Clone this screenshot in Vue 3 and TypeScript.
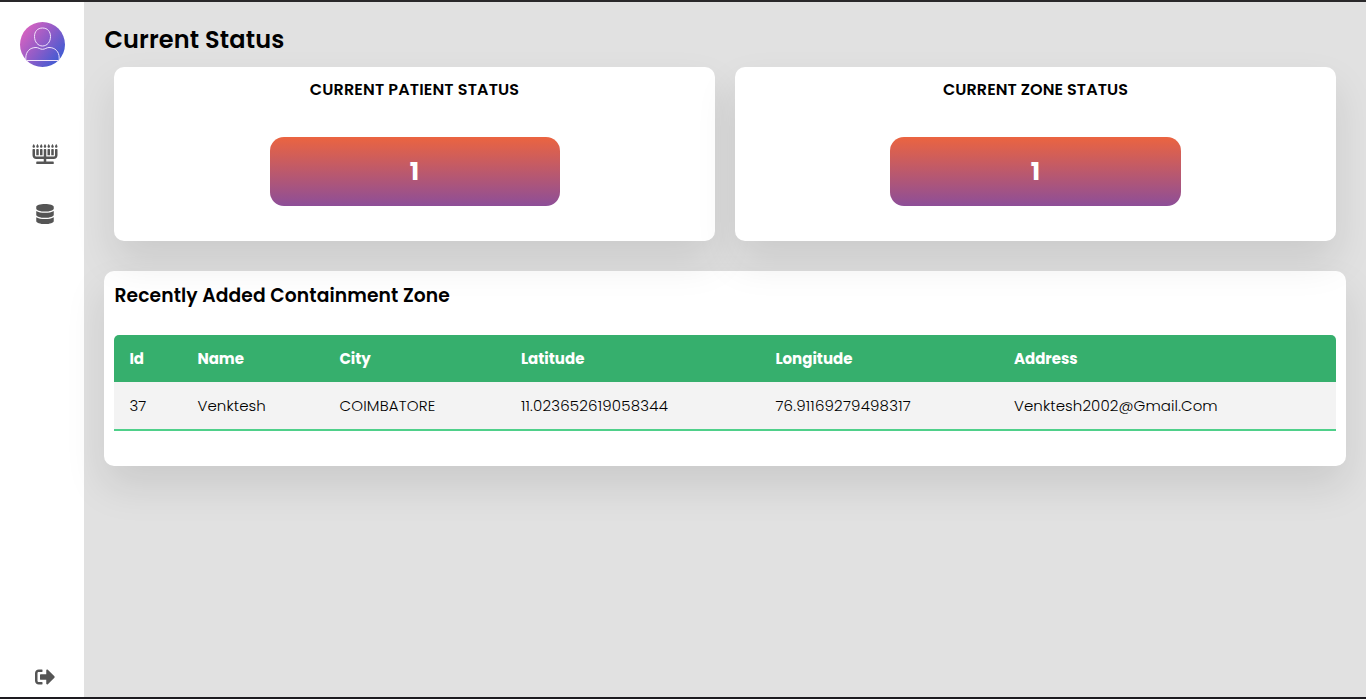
<script setup lang="ts">
interface StatusCard {
  title: string
  count: number
  kind: string
}

interface Zone {
  id: number
  name: string
  city: string
  latitude: string
  longitude: string
  address: string
}

const cards: StatusCard[] = [
  { title: 'CURRENT PATIENT STATUS', count: 1, kind: 'patient' },
  { title: 'CURRENT ZONE STATUS', count: 1, kind: 'zone' },
]

const columns: { key: keyof Zone; label: string }[] = [
  { key: 'id', label: 'Id' },
  { key: 'name', label: 'Name' },
  { key: 'city', label: 'City' },
  { key: 'latitude', label: 'Latitude' },
  { key: 'longitude', label: 'Longitude' },
  { key: 'address', label: 'Address' },
]

const zones: Zone[] = [
  {
    id: 37,
    name: 'Venktesh',
    city: 'COIMBATORE',
    latitude: '11.023652619058344',
    longitude: '76.91169279498317',
    address: 'Venktesh2002@Gmail.Com',
  },
]
</script>

<template>
  <div class="app">
    <aside class="sidebar">
      <svg class="avatar" viewBox="0 0 45 45">
        <defs>
          <linearGradient id="avatarFill" x1="0.05" y1="0.2" x2="0.9" y2="0.85">
            <stop offset="0" stop-color="#d862c0" />
            <stop offset="0.5" stop-color="#8f5cc8" />
            <stop offset="1" stop-color="#3d5bd3" />
          </linearGradient>
          <clipPath id="avatarClip"><circle cx="22.5" cy="22.5" r="22.5" /></clipPath>
        </defs>
        <circle cx="22.5" cy="22.5" r="22.5" fill="url(#avatarFill)" />
        <g clip-path="url(#avatarClip)" fill="none" stroke="#f1e4fb" stroke-width="1">
          <path d="M22.5 6C27.5 6 30.5 9.500 30.500 14.500C30.500 20 27 24 22.500 24C18 24 14.500 20 14.500 14.500C14.500 9.500 17.500 6 22.500 6Z" />
          <path d="M5.800 38.500V36C5.800 29.500 10 25.500 16 25.500C18.500 25.500 20 27.300 22.500 27.300C25 27.300 26.500 25.500 29 25.500C35 25.500 39.200 29.500 39.200 36V38.500Z" />
        </g>
      </svg>
      <nav class="menu">
        <svg class="menorah" viewBox="0 0 640 512">
          <path fill="currentColor" d="M144 128h-32a16 16 0 0 0-16 16v144h64V144a16 16 0 0 0-16-16zm96 0h-32a16 16 0 0 0-16 16v144h64V144a16 16 0 0 0-16-16zm192 0h-32a16 16 0 0 0-16 16v144h64V144a16 16 0 0 0-16-16zm96 0h-32a16 16 0 0 0-16 16v144h64V144a16 16 0 0 0-16-16zm80-32c17.670 0 32-14.330 32-32S608 0 608 0s-32 46.330-32 64 14.330 32 32 32zm-96 0c17.670 0 32-14.330 32-32S512 0 512 0s-32 46.330-32 64 14.330 32 32 32zm-96 0c17.670 0 32-14.330 32-32S416 0 416 0s-32 46.330-32 64 14.330 32 32 32zm-96 0c17.670 0 32-14.330 32-32S320 0 320 0s-32 46.330-32 64 14.330 32 32 32zm-96 0c17.670 0 32-14.330 32-32S224 0 224 0s-32 46.330-32 64 14.330 32 32 32zm-96 0c17.670 0 32-14.330 32-32S128 0 128 0 96 46.330 96 64s14.330 32 32 32zm-96 0c17.670 0 32-14.330 32-32S32 0 32 0 0 46.330 0 64s14.330 32 32 32zm544 48v144c0 17.670-14.330 32-32 32H352V144a16 16 0 0 0-16-16h-32a16 16 0 0 0-16 16v176H96c-17.670 0-32-14.330-32-32V144a16 16 0 0 0-16-16H16a16 16 0 0 0-16 16v144c0 53.020 42.980 96 96 96h192v64H112a16 16 0 0 0-16 16v32a16 16 0 0 0 16 16h416a16 16 0 0 0 16-16v-32a16 16 0 0 0-16-16H352v-64h192c53.020 0 96-42.980 96-96V144a16 16 0 0 0-16-16h-32a16 16 0 0 0-16 16z" />
        </svg>
        <svg class="database" viewBox="0 0 448 512">
          <path fill="currentColor" d="M448 73.143v45.714C448 159.143 347.667 192 224 192S0 159.143 0 118.857V73.143C0 32.857 100.333 0 224 0s224 32.857 224 73.143zM448 176v102.857C448 319.143 347.667 352 224 352S0 319.143 0 278.857V176c48.125 33.143 136.208 48.572 224 48.572S399.874 209.143 448 176zm0 160v102.857C448 479.143 347.667 512 224 512S0 479.143 0 438.857V336c48.125 33.143 136.208 48.572 224 48.572S399.874 369.143 448 336z" />
        </svg>
      </nav>
      <svg class="logout" viewBox="0 0 512 512">
        <path fill="currentColor" d="M497 273L329 441c-15 15-41 4.500-41-17v-96H152c-13.300 0-24-10.700-24-24v-96c0-13.300 10.700-24 24-24h136V88c0-21.400 25.900-32 41-17l168 168c9.300 9.400 9.300 24.600 0 34zM192 436v-40c0-6.600-5.400-12-12-12H96c-17.700 0-32-14.300-32-32V160c0-17.700 14.300-32 32-32h84c6.600 0 12-5.400 12-12V76c0-6.600-5.400-12-12-12H96c-53 0-96 43-96 96v192c0 53 43 96 96 96h84c6.600 0 12-5.400 12-12z" />
      </svg>
    </aside>
    <main class="content">
      <h1>Current Status</h1>
      <section class="cards">
        <article v-for="card in cards" :key="card.kind" class="card" :class="card.kind">
          <h2>{{ card.title }}</h2>
          <div class="count">{{ card.count }}</div>
        </article>
      </section>
      <section class="panel">
        <h3>Recently Added Containment Zone</h3>
        <table>
          <thead>
            <tr>
              <th v-for="col in columns" :key="col.key" :class="col.key">{{ col.label }}</th>
            </tr>
          </thead>
          <tbody>
            <tr v-for="zone in zones" :key="zone.id">
              <td v-for="col in columns" :key="col.key" :class="col.key">{{ zone[col.key] }}</td>
            </tr>
          </tbody>
        </table>
      </section>
    </main>
  </div>
</template>

<style>
body {
  margin: 0;
  overflow: hidden;
}
</style>

<style scoped>
* {
  box-sizing: border-box;
}
.app {
  display: flex;
  height: 699px;
  border-top: 2px solid #29282a;
  border-bottom: 2px solid #1d1b20;
  background: #e1e1e1;
  font-family: Poppins, Inter, "Open Sans", sans-serif;
  color: #000;
}
.sidebar {
  display: flex;
  flex-direction: column;
  align-items: center;
  width: 84px;
  padding: 20px 0 10px;
  background: #fff;
  color: #555;
}
.avatar {
  width: 45px;
  height: 45px;
}
.menu {
  display: flex;
  flex-direction: column;
  align-items: center;
  gap: 40px;
  margin: 77px 0 auto 5px;
}
.menorah {
  width: 26px;
  height: 20px;
}
.database {
  width: 18px;
  height: 20px;
}
.logout {
  width: 20px;
  height: 20px;
  margin-left: 5px;
}
.content {
  flex: 1;
  padding: 20px 20px 0;
}
h1,
h2,
h3 {
  margin: 0;
  font-weight: 600;
  white-space: nowrap;
}
h1 {
  height: 45px;
  padding-left: 0.5px;
  font-size: 24px;
  line-height: 35px;
  letter-spacing: 0.15px;
}
.cards {
  position: relative;
  z-index: 1;
  display: flex;
  gap: 20px;
  padding: 0 10px;
}
.card {
  display: flex;
  flex: 1;
  flex-direction: column;
  align-items: center;
  height: 174px;
  border-radius: 10px;
  background: #fff;
  box-shadow: 0 20px 40px rgba(0, 0, 0, 0.1);
}
.card h2 {
  height: 70px;
  font-size: 16px;
  line-height: 45px;
}
.patient h2 {
  letter-spacing: 0.16px;
}
.zone h2 {
  letter-spacing: 0.08px;
}
.count {
  width: 290.500px;
  height: 69px;
  border-radius: 14px;
  background: linear-gradient(#eb6440, #8d4e98);
  color: #fff;
  font-size: 25px;
  font-weight: 700;
  line-height: 70px;
  text-align: center;
}
.patient .count {
  width: 290px;
}
.panel {
  height: 195px;
  margin-top: 30px;
  padding: 10px 10px 0;
  border-radius: 10px;
  background: #fff;
  box-shadow: 0 20px 40px rgba(0, 0, 0, 0.1);
}
h3 {
  height: 54px;
  padding-left: 0.5px;
  font-size: 18.720px;
  line-height: 30px;
  letter-spacing: 0.1px;
}
table {
  width: 100%;
  border-collapse: separate;
  border-spacing: 0;
  border-radius: 5px 5px 0 0;
  overflow: hidden;
  table-layout: fixed;
  font-size: 15px;
  text-align: left;
}
th,
td {
  padding: 0 0 0 15.400px;
  white-space: nowrap;
}
th {
  height: 47px;
  background: #36af6d;
  color: #fff;
  font-weight: 700;
}
td {
  height: 49px;
  border-bottom: 2px solid #4fd08a;
  background: #f3f3f3;
  font-weight: 300;
}
.id {
  width: 68px;
}
.name {
  width: 142px;
}
.city {
  width: 181.500px;
}
.latitude {
  width: 254.500px;
}
.longitude {
  width: 238.500px;
}
td.id,
td.name,
td.address {
  letter-spacing: 0.1px;
}
td.city,
td.latitude,
td.longitude {
  letter-spacing: 0.2px;
}
</style>
